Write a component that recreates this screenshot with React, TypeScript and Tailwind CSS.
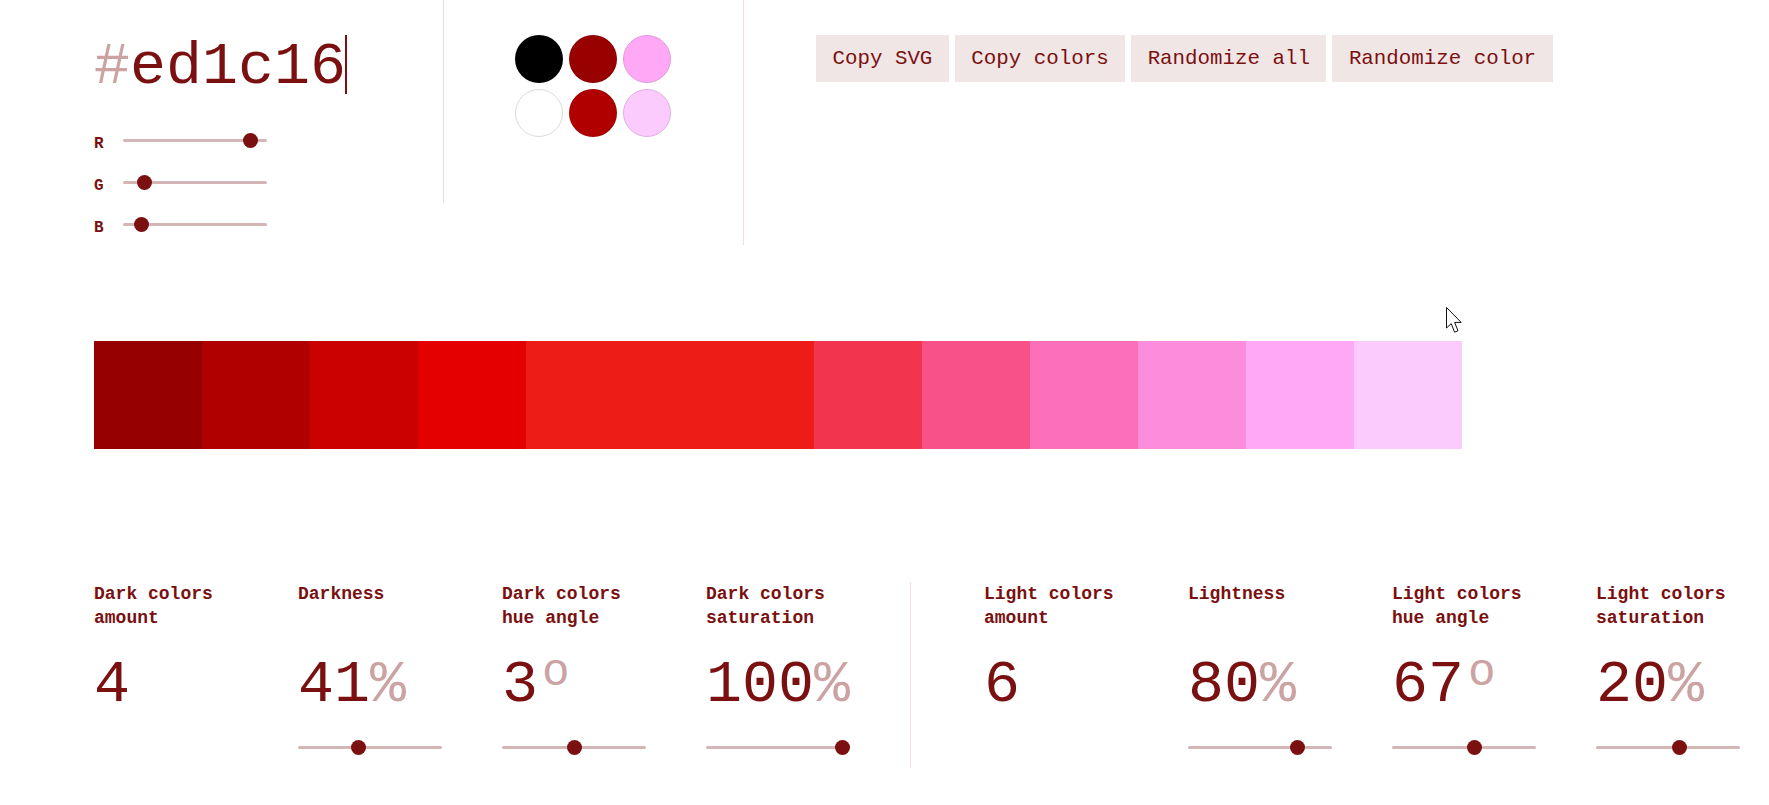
import React from "react";

function Slider({ value }: { value: number }) {
  return (
    <div className="relative h-[15px] w-[144px]">
      <div className="absolute left-0 right-0 top-[6px] h-[3px] rounded-full bg-[#d5b6b6]" />
      <div
        className="absolute top-0 h-[15px] w-[15px] rounded-full bg-[#7a1010]"
        style={{ left: `${value * 129}px` }}
      />
    </div>
  );
}

function RgbRow({ label, value }: { label: string; value: number }) {
  return (
    <div className="flex h-[42px] items-center">
      <div className="w-[29px] pt-[7px] text-[16px] font-bold leading-[18px]">{label}</div>
      <Slider value={value} />
    </div>
  );
}

const palette: { c: string; w: string }[] = [
  { c: "#960000", w: "w-[108px]" },
  { c: "#b00000", w: "w-[108px]" },
  { c: "#cb0000", w: "w-[108px]" },
  { c: "#e50000", w: "w-[108px]" },
  { c: "#ed1c16", w: "w-[288px]" },
  { c: "#f3344f", w: "w-[108px]" },
  { c: "#f85189", w: "w-[108px]" },
  { c: "#fc6fb9", w: "w-[108px]" },
  { c: "#fc8cdc", w: "w-[108px]" },
  { c: "#fea8f6", w: "w-[108px]" },
  { c: "#fccbfd", w: "w-[108px]" },
];

function Param({
  l1,
  l2,
  num,
  unit,
  deg,
  slider,
}: {
  l1: string;
  l2?: string;
  num: string;
  unit?: string;
  deg?: boolean;
  slider?: number;
}) {
  return (
    <div className="flex w-[144px] flex-col">
      <div className="h-[48px] pt-[1px] text-[18px] font-bold leading-[24px]">
        <div>{l1}</div>
        {l2 ? <div>{l2}</div> : null}
      </div>
      <div className="mt-[26px] flex h-[60px] items-start whitespace-nowrap">
        <span className="text-[60px] leading-[60px]">{num}</span>
        {unit ? <span className="text-[60px] leading-[60px] text-[#cba3a3]">{unit}</span> : null}
        {deg ? (
          <span className="ml-[4px] mt-[-3px] text-[46px] leading-[43px] text-[#cba3a3]">o</span>
        ) : null}
      </div>
      {slider !== undefined ? (
        <div className="mt-[25px]">
          <Slider value={slider} />
        </div>
      ) : null}
    </div>
  );
}

export default function App() {
  return (
    <div
      className="relative min-h-[805px] w-full bg-white pl-[94px] text-[#7a1010]"
      style={{ fontFamily: '"Liberation Mono", "DejaVu Sans Mono", monospace' }}
    >
      {/* top section */}
      <div className="flex h-[245px] items-start">
        <div className="w-[349px] pt-[33px]">
          <div className="flex items-start">
            <div className="h-[68px] text-[60px] leading-[68px]">
              <span className="text-[#cba3a3]">#</span>
              <span>ed1c16</span>
            </div>
            <div className="ml-[-1px] mt-[2px] h-[59px] w-[2px] bg-[#7a1010]" />
          </div>
          <div className="mt-[18px]">
            <RgbRow label="R" value={237 / 255} />
            <RgbRow label="G" value={28 / 255} />
            <RgbRow label="B" value={22 / 255} />
          </div>
        </div>
        <div className="h-[203px] w-px bg-[#f1dddd]" />
        <div className="w-[299px] pl-[71px] pt-[35px]">
          <div className="grid w-[156px] grid-cols-[48px_48px_48px] gap-[6px]">
            <div className="h-[48px] w-[48px] rounded-full border border-black/10 bg-black" />
            <div className="h-[48px] w-[48px] rounded-full border border-black/10 bg-[#990000]" />
            <div className="h-[48px] w-[48px] rounded-full border border-[#e39ad9] bg-[#fea8f6]" />
            <div className="h-[48px] w-[48px] rounded-full border border-[#dcdcdc] bg-white" />
            <div className="h-[48px] w-[48px] rounded-full border border-black/10 bg-[#b00000]" />
            <div className="h-[48px] w-[48px] rounded-full border border-[#e0b0e0] bg-[#fccbfd]" />
          </div>
        </div>
        <div className="h-[245px] w-px bg-[#f1dddd]" />
        <div className="flex gap-[6px] pl-[72px] pt-[35px]">
          {["Copy SVG", "Copy colors", "Randomize all", "Randomize color"].map((t) => (
            <button
              key={t}
              className="h-[47px] whitespace-nowrap bg-[#f1e6e6] px-[16.5px] text-[20.8px] text-[#7a1010]"
              style={{ fontFamily: '"Liberation Mono", monospace' }}
            >
              {t}
            </button>
          ))}
        </div>
      </div>

      {/* palette */}
      <div className="mt-[96px] flex h-[108px]">
        {palette.map((p, i) => (
          <div key={i} className={`${p.w} h-[108px]`} style={{ backgroundColor: p.c }} />
        ))}
      </div>

      {/* bottom params */}
      <div className="mt-[132px] flex items-start gap-[60px]">
        <Param l1="Dark colors" l2="amount" num="4" />
        <Param l1="Darkness" num="41" unit="%" slider={0.41} />
        <Param l1="Dark colors" l2="hue angle" num="3" deg slider={0.5} />
        <Param l1="Dark colors" l2="saturation" num="100" unit="%" slider={1} />
        <div className="mr-[13px] mt-[1px] h-[186px] w-px bg-[#f1dddd]" />
        <Param l1="Light colors" l2="amount" num="6" />
        <Param l1="Lightness" num="80" unit="%" slider={0.79} />
        <Param l1="Light colors" l2="hue angle" num="67" deg slider={0.585} />
        <Param l1="Light colors" l2="saturation" num="20" unit="%" slider={0.59} />
      </div>

      {/* mouse pointer */}
      <svg
        className="absolute left-[1446px] top-[307px]"
        width="18"
        height="27"
        viewBox="0 0 18 27"
      >
        <path
          d="M0.5 0.5 L0.5 21 L5.2 16.6 L8.6 25.2 L12 23.8 L8.6 15.4 L15.2 15.4 Z"
          fill="white"
          stroke="#111"
          strokeWidth="1"
          strokeLinejoin="miter"
        />
      </svg>
    </div>
  );
}
